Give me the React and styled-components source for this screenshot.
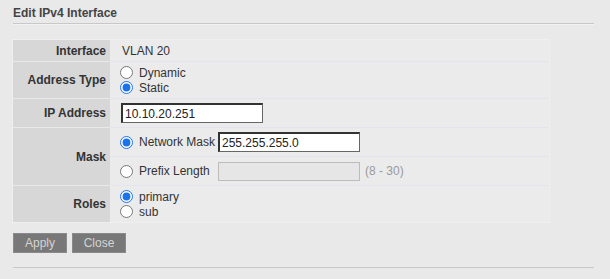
import React from "react";
import styled, { createGlobalStyle } from "styled-components";

const GlobalStyle = createGlobalStyle`
  html, body {
    margin: 0;
    padding: 0;
    background: #e9e9e9;
  }
  body {
    font-family: "Liberation Sans", Arial, sans-serif;
    font-size: 12px;
    color: #333;
  }
`;

export default function App() {
  return (
    <Page>
      <GlobalStyle />
      <Title>Edit IPv4 Interface</Title>
      <Rule />

      <FormTable>
        <tbody>
          <Row>
            <Label>Interface</Label>
            <Value>VLAN 20</Value>
          </Row>
          <Row>
            <Label>Address Type</Label>
            <Value $pad="3px 0 3px 10px">
              <RadioLine>
                <Radio name="type" />
                Dynamic
              </RadioLine>
              <RadioLine>
                <Radio name="type" defaultChecked />
                Static
              </RadioLine>
            </Value>
          </Row>
          <Row>
            <Label>IP Address</Label>
            <Value $pad="4px 0 4px 11px">
              <TextInput defaultValue="10.10.20.251" $width="142px" />
            </Value>
          </Row>
          <Row>
            <Label>Mask</Label>
            <Value $pad="0">
              <SubTable>
                <tbody>
                  <SubRow>
                    <SubCell>
                      <RadioLine>
                        <Radio name="mask" defaultChecked />
                        Network Mask
                      </RadioLine>
                    </SubCell>
                    <SubCell>
                      <TextInput defaultValue="255.255.255.0" $width="142px" />
                    </SubCell>
                  </SubRow>
                  <SubRow $last>
                    <SubCell>
                      <RadioLine>
                        <Radio name="mask" />
                        Prefix Length
                      </RadioLine>
                    </SubCell>
                    <SubCell>
                      <TextInput disabled $width="142px" />
                      <Hint>(8 - 30)</Hint>
                    </SubCell>
                  </SubRow>
                </tbody>
              </SubTable>
            </Value>
          </Row>
          <Row $last>
            <Label>Roles</Label>
            <Value $pad="3px 0 3px 10px">
              <RadioLine>
                <Radio name="role" defaultChecked />
                primary
              </RadioLine>
              <RadioLine>
                <Radio name="role" />
                sub
              </RadioLine>
            </Value>
          </Row>
        </tbody>
      </FormTable>

      <Buttons>
        <Button>Apply</Button>
        <Button>Close</Button>
      </Buttons>
      <Rule $bottom />
    </Page>
  );
}

const Radio = (props) => <RadioInput type="radio" {...props} />;

const Page = styled.div`
  padding: 6px 16px 0 13px;
  width: 581px;
`;

const Title = styled.div`
  font-weight: bold;
  font-size: 12px;
  color: #444;
  line-height: 14px;
`;

const Rule = styled.div`
  height: 1px;
  background: #c8c8c8;
  margin-top: ${(p) => (p.$bottom ? "14px" : "3px")};
  box-shadow: 0 1px 0 #f2f2f2;
`;

const FormTable = styled.table`
  margin-top: 16px;
  width: 536px;
  border-collapse: collapse;
  background: #ebebeb;
  outline: 1px solid #efeff3;
`;

const Row = styled.tr`
  & > td {
    border-bottom: ${(p) => (p.$last ? "none" : "1px solid #e4e4ef")};
  }
  & > td:first-child {
    border-bottom-color: ${(p) => (p.$last ? "transparent" : "#e9e9e9")};
  }
`;

const Label = styled.td`
  width: 93px;
  background: #d7d7d7;
  font-weight: bold;
  text-align: right;
  padding: 0 4px 0 0;
  color: #333;
  height: 21px;
`;

const Value = styled.td`
  padding: ${(p) => p.$pad || "0 0 0 12px"};
  vertical-align: middle;
  color: #333;
`;

const RadioLine = styled.label`
  display: flex;
  align-items: center;
  height: 15px;
  gap: 6px;
`;

const RadioInput = styled.input`
  margin: 0;
  width: 13px;
  height: 13px;
  accent-color: #1a73e8;
`;

const TextInput = styled.input`
  box-sizing: border-box;
  width: ${(p) => p.$width};
  height: 20px;
  padding: 0 2px;
  font-family: "Liberation Sans", Arial, sans-serif;
  font-size: 12px;
  color: #222;
  background: #fff;
  border-style: solid;
  border-width: 2px 1px 1px 2px;
  border-color: #333 #666 #666 #333;
  outline: none;
  vertical-align: middle;

  &:disabled {
    background: #e6e6e6;
    border-width: 1px;
    border-color: #bcbcbc;
    height: 19px;
  }
`;

const SubTable = styled.table`
  width: 100%;
  border-collapse: collapse;
`;

const SubRow = styled.tr`
  & > td {
    height: 28px;
    border-bottom: ${(p) => (p.$last ? "none" : "1px solid #e4e4ef")};
  }
`;

const SubCell = styled.td`
  padding: 0;
  vertical-align: middle;
  line-height: 14px;
  &:first-child {
    width: 98px;
    padding-left: 10px;
  }
`;

const Hint = styled.span`
  margin-left: 5px;
  color: #9a9a9a;
  font-size: 12px;
  vertical-align: middle;
`;

const Buttons = styled.div`
  display: flex;
  gap: 5px;
  margin-top: 11px;
`;

const Button = styled.button`
  width: 54px;
  height: 20px;
  padding: 0;
  background: #787878;
  border: 1px solid #8a8a8a;
  color: #d4d4d4;
  font-family: "Liberation Sans", Arial, sans-serif;
  font-size: 12px;
  cursor: pointer;
`;
